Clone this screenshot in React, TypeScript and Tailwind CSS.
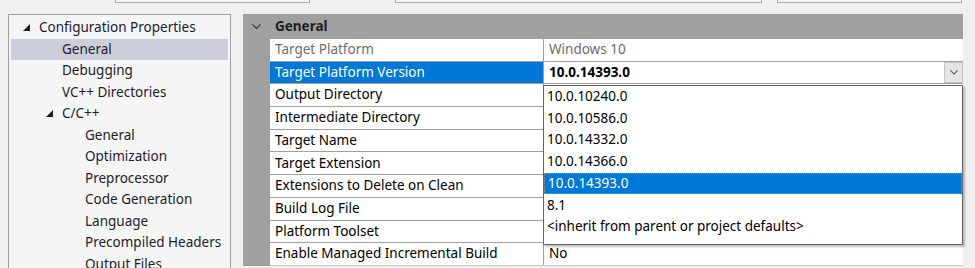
import React from 'react';

// tree rows shown on the left side
const treeItems: { label: string; level: number; expanded?: boolean; selected?: boolean }[] = [
  { label: 'Configuration Properties', level: 0, expanded: true },
  { label: 'General', level: 1, selected: true },
  { label: 'Debugging', level: 1 },
  { label: 'VC++ Directories', level: 1 },
  { label: 'C/C++', level: 1, expanded: true },
  { label: 'General', level: 2 },
  { label: 'Optimization', level: 2 },
  { label: 'Preprocessor', level: 2 },
  { label: 'Code Generation', level: 2 },
  { label: 'Language', level: 2 },
  { label: 'Precompiled Headers', level: 2 },
  { label: 'Output Files', level: 2 },
];

const properties: { name: string; value: string }[] = [
  { name: 'Target Platform', value: 'Windows 10' },
  { name: 'Target Platform Version', value: '10.0.14393.0' },
  { name: 'Output Directory', value: '' },
  { name: 'Intermediate Directory', value: '' },
  { name: 'Target Name', value: '' },
  { name: 'Target Extension', value: '' },
  { name: 'Extensions to Delete on Clean', value: '' },
  { name: 'Build Log File', value: '' },
  { name: 'Platform Toolset', value: '' },
  { name: 'Enable Managed Incremental Build', value: 'No' },
];

const versions = ['10.0.10240.0', '10.0.10586.0', '10.0.14332.0', '10.0.14366.0', '10.0.14393.0', '8.1', '<inherit from parent or project defaults>'];

const font = { fontFamily: '"Segoe UI", "Noto Sans", sans-serif' };

function ExpandedArrow() {
  return (
    <svg width="7" height="7" viewBox="0 0 7 7" className="shrink-0">
      <polygon points="7,0 7,7 0,7" fill="#1e1e1e" />
    </svg>
  );
}

function Chevron({ size = 9, color = '#444' }: { size?: number; color?: string }) {
  return (
    <svg width={size} height={size * 0.6} viewBox="0 0 10 6">
      <polyline points="0.5,0.5 5,5 9.5,0.5" fill="none" stroke={color} strokeWidth="1.3" />
    </svg>
  );
}

function TreeRow({ label, level, expanded, selected }: (typeof treeItems)[number]) {
  const indent = level === 0 ? 'pl-[12px]' : level === 1 ? 'pl-[35px]' : 'pl-[58px]';
  return (
    <div className={`flex items-center h-[21.5px] ${indent} ${selected ? 'bg-[#cccedb]' : ''}`}>
      <div className="w-[20px] flex items-center">{expanded && <ExpandedArrow />}</div>
      <span className="text-[#1b1d2b] whitespace-nowrap -ml-[4px]">{label}</span>
    </div>
  );
}

export default function App() {
  return (
    <div className="w-[975px] h-[268px] bg-[#f0f0f0] overflow-hidden text-[13.5px] leading-none" style={font}>
      {/* bottoms of the combo boxes above */}
      <div className="flex h-[14px]">
        <div className="ml-[115px] w-[195px] h-[3px] border-x border-b border-[#adadad] bg-[#f5f5f5]" />
        <div className="ml-[85px] w-[367px] h-[3px] border-x border-b border-[#adadad] bg-[#f5f5f5]" />
        <div className="ml-[15px] w-[185px] h-[3px] border-x border-b border-[#adadad] bg-[#f5f5f5]" />
      </div>

      <div className="flex pl-[8px] items-start">
        {/* category tree */}
        <div className="w-[223px] h-[260px] border border-[#a0a0a0] bg-[#f5f5f5] pt-[2px] px-[2px]">
          {treeItems.map((item, i) => (
            <TreeRow key={i} {...item} />
          ))}
        </div>

        {/* property grid */}
        <div className="relative ml-[12px] w-[720px] h-[252px] bg-[#a0a0a0]">
          <div className="flex items-center h-[25px]">
            <div className="w-[27px] flex justify-center pt-[1px]">
              <Chevron size={9} color="#333" />
            </div>
            <span className="font-bold text-[#1e1e1e] pl-[5px]">General</span>
          </div>
          <div className="ml-[27px]">
            {properties.map((p, i) => {
              const active = i === 1;
              return (
                <div key={i} className={`flex h-[22.7px] border-b ${i === 9 ? 'border-[#c8c8c8]' : 'border-[#a0a0a0]'}`}>
                  <div
                    className={`w-[274px] flex items-center pl-[5px] border-r border-[#a0a0a0] ${
                      active ? 'bg-[#0078d7] text-white' : 'bg-white'
                    } ${i === 0 ? 'text-[#6d6d6d]' : active ? '' : 'text-black'}`}
                  >
                    {p.name}
                  </div>
                  <div className={`flex-1 flex items-center bg-white ${i === 0 ? 'text-[#6d6d6d]' : 'text-black'}`}>
                    <span className={`pl-[5px] flex-1 ${active ? 'font-bold' : ''}`}>{p.value}</span>
                    {active && (
                      <div className="w-[19px] h-full border border-[#c4c4c4] bg-[#e5e5e5] flex items-center justify-center">
                        <Chevron size={8} color="#555" />
                      </div>
                    )}
                  </div>
                </div>
              );
            })}
          </div>

          {/* open dropdown list */}
          <div className="absolute left-[300px] top-[71px] w-[420px] h-[160px] bg-white border border-[#646464] shadow-[2px_2px_2px_rgba(0,0,0,0.25)]">
            {versions.map((v, i) => (
              <div
                key={i}
                className={`h-[21.7px] flex items-center pl-[3px] ${
                  i === 4 ? 'bg-[#0078d7] text-white border border-dotted border-[#d08a3a]' : 'text-black'
                }`}
              >
                {v}
              </div>
            ))}
          </div>
        </div>
      </div>
    </div>
  );
}
